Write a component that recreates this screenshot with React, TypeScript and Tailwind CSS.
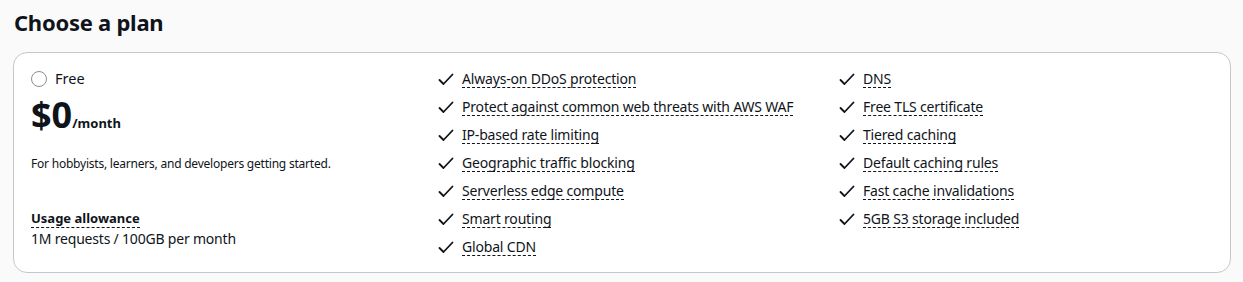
import React from "react";

const col2 = [
  "Always-on DDoS protection",
  "Protect against common web threats with AWS WAF",
  "IP-based rate limiting",
  "Geographic traffic blocking",
  "Serverless edge compute",
  "Smart routing",
  "Global CDN",
];
const col3 = [
  "DNS",
  "Free TLS certificate",
  "Tiered caching",
  "Default caching rules",
  "Fast cache invalidations",
  "5GB S3 storage included",
];

function Check() {
  return (
    <svg width="16" height="16" viewBox="0 0 16 16" fill="none" className="shrink-0">
      <path d="M1.5 9 L5.5 13 L14.5 3.5" stroke="#0f141a" strokeWidth="1.8" strokeLinecap="round" strokeLinejoin="round" />
    </svg>
  );
}

function Item({ text }: { text: string }) {
  return (
    <li className="flex items-center gap-[8px] h-[28px]">
      <Check />
      <span className="border-b border-dashed border-[#0f141a] leading-[17px] tracking-[-0.18px]">{text}</span>
    </li>
  );
}

export default function App() {
  return (
    <div
      className="w-[1243px] h-[282px] bg-[#fafafa] text-[#0f141a] px-[13px] pt-[6px]"
      style={{ fontFamily: '"Noto Sans", "Open Sans", sans-serif' }}
    >
      <h1 className="text-[22px] font-bold leading-[32px] pl-[1px] tracking-[-0.25px]">Choose a plan</h1>
      <div className="mt-[14px] w-[1218px] h-[221px] bg-white border border-[#c6c6cd] rounded-[14px] pl-[17px] pt-[12px] grid grid-cols-[407px_401px_1fr] text-[14px]">
        <div className="flex flex-col">
          <label className="flex items-center gap-[8px] h-[28px]">
            <span className="w-[16px] h-[16px] rounded-full border border-[#8c8c94] bg-white" />
            <span className="text-[14.5px]">Free</span>
          </label>
          <div className="flex items-baseline mt-[2px]">
            <span className="text-[36px] font-bold leading-[40px]">$0</span>
            <span className="text-[13px] font-bold">/month</span>
          </div>
          <p className="text-[12px] tracking-[-0.22px] mt-[21px] leading-[16px]">For hobbyists, learners, and developers getting started.</p>
          <div className="mt-[35px]">
            <span className="font-bold text-[13px] border-b border-dashed border-[#0f141a] leading-[17px]">Usage allowance</span>
          </div>
          <div className="text-[14px] tracking-[-0.2px] leading-[20px] mt-[1px]">1M requests / 100GB per month</div>
        </div>
        <ul className="flex flex-col">
          {col2.map((t) => (
            <Item key={t} text={t} />
          ))}
        </ul>
        <ul className="flex flex-col">
          {col3.map((t) => (
            <Item key={t} text={t} />
          ))}
        </ul>
      </div>
    </div>
  );
}
